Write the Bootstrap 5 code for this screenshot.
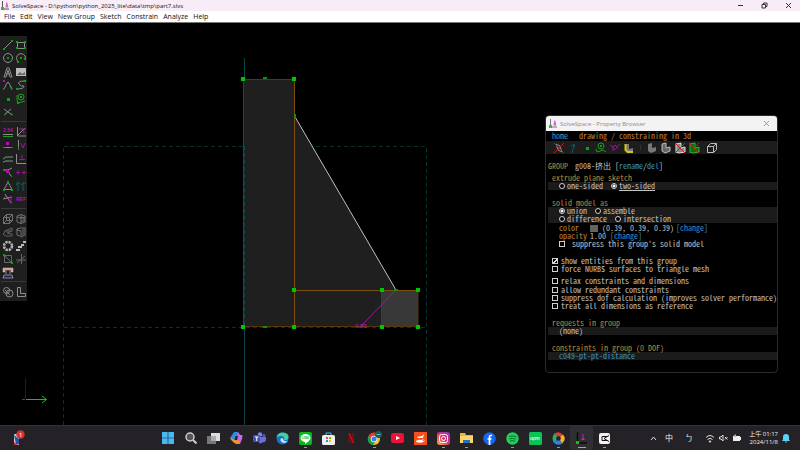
<!DOCTYPE html>
<html lang="en">
<head>
<meta charset="utf-8">
<meta name="viewport" content="width=device-width, initial-scale=1">
<title>SolveSpace</title>
<link rel="stylesheet" href="https://cdn.jsdelivr.net/npm/bootstrap@5.3.0/dist/css/bootstrap.min.css">
<style>
body{font-family:"Open Sans","Noto Sans CJK TC",sans-serif;font-size:6px;line-height:8px;color:#111}
svg{display:block}
.btn{font-size:inherit;line-height:inherit;border:0;border-radius:0;color:inherit;padding:0}
.titlebar{height:11px;background:#f8ecf6;padding-left:1px}
.app-mark{margin-right:2px}
.win-ctl .btn{width:24px;height:11px;display:flex;align-items:center;justify-content:center}
.menubar{height:12px;background:#fff;padding-left:4px;gap:5px;font-size:7px;border-bottom:1px solid #777}
.workspace{background:#000;min-height:0}
.tools{width:27px;top:13px;background:#1f1f1f;padding:2px 1px 3px}
.tool-grid{display:grid;grid-template-columns:repeat(2,13px)}
.tool-grid .btn{height:13px;display:flex;align-items:center;justify-content:center}
.g6{height:81px;align-content:space-between}
.g5{height:67px;align-content:space-between}
.sep{height:1px;background:#3a3a3a;margin:2px 0 3px}
.ic{fill:none;stroke:#8e8e8e;stroke-width:1}
.ic .g{stroke:#1f9a1f}.ic .m{stroke:#a010a0}.ic .t{stroke:#0d6060}
.ic .gf{fill:#0a0;stroke:none}.ic .mf{fill:#b010b0;stroke:none}.ic .wf{fill:#bbb;stroke:none}
.ic text{stroke:none;fill:#b010b0;font:bold 5px "Liberation Sans",sans-serif}
.props{width:233px;top:92px;right:22px;background:#000;border:1px solid #2b2b2b;border-radius:4px;overflow:hidden;
 font-family:"Noto Sans Mono CJK TC","Liberation Mono","Noto Sans CJK TC",monospace;font-size:8px;line-height:8px;color:#c4c4c4}
.props-title{height:15px;background:#f3f3f3;color:#8c8c8c;font-family:"Open Sans",sans-serif;font-size:6px;padding:0 7px 0 3px}
.props a{color:#3a94c4;text-decoration:none}
.props a.opt{color:#c4c4c4;text-decoration:underline}
.hd{color:#bd8a3c}
.ln{display:flex;align-items:center;height:8px;white-space:pre}
.in0{padding-left:2px}.in1{padding-left:6px}.in2{padding-left:13px}
.band{background:#1b1b1b;margin-left:2px}
.band .in2{padding-left:11px}
.pbar{height:13px;background:#1d1d1d;padding-left:6px}
.pbar .btn{width:14px;height:13px;display:flex;align-items:center;justify-content:center}
.w-home{width:27px}.w-color{width:31px}.w-swatch{width:12px}.w-rgb{width:74px}
.swatch{width:8px;height:7px;background:#646464}
.props input{appearance:none;margin:0;width:6px;height:6px;border:1px solid #d0d0d0;background:#000;flex:none}
.props input[type=radio]{border-radius:50%}
.props input[type=radio]:checked{background:radial-gradient(#fff 0 1px,#000 2px)}
.props input[type=checkbox]:checked{background:linear-gradient(135deg,#000 40%,#ddd 45% 65%,#000 70%)}
.props label{display:flex;align-items:center}
.lr{gap:2px}.lc{gap:3px}.ls{gap:7px}
.sp4{margin-top:4px}.sp1{margin-top:1px}.sp9{margin-top:9px}
.props-end{height:12px}
.taskbar{height:25px;background:#242226;border-top:1px solid #343236;color:#eee}
.weather{width:156px;padding-left:12px}
.apps .btn{width:23px;height:24px;display:flex;align-items:center;justify-content:center;position:relative}
.apps .run::after{content:"";position:absolute;bottom:2px;width:3px;height:1px;background:#999}
.apps .cur{background:#302e32;border-radius:2px}
.apps .cur::after{content:"";position:absolute;bottom:2px;width:8px;height:1px;background:#5cc0f0}
.tray{padding-right:10px}
.tray .btn{font-size:8px}
.clock{width:36px;text-align:right}
</style>
<script src="https://cdn.jsdelivr.net/npm/bootstrap@5.3.0/dist/js/bootstrap.bundle.min.js"></script>
</head>
<body class="vh-100 d-flex flex-column overflow-hidden">
<header>
 <div class="titlebar d-flex align-items-center">
  <svg class="app-mark" width="9" height="9" viewBox="0 0 9 9"><path d="M1.500 0v8H8" fill="none" stroke="#555"/><path d="M4.500 6.500l.8-5h1l1 5z" fill="#d060d0"/><path d="M0 6h3v3H0z" fill="#3b3"/></svg>
  <span>SolveSpace - D:\python\python_2025_lite\data\tmp\part7.slvs</span>
  <div class="win-ctl d-flex ms-auto">
   <button class="btn" aria-label="Minimize"><svg width="7" height="7" viewBox="0 0 7 7"><path d="M1 3.500h5" stroke="#333"/></svg></button>
   <button class="btn" aria-label="Restore"><svg width="7" height="7" viewBox="0 0 7 7" fill="none" stroke="#333"><path d="M1 2.500h3.500V6H1zM2.500 2V1H6v3.500H5"/></svg></button>
   <button class="btn" aria-label="Close"><svg width="7" height="7" viewBox="0 0 7 7"><path d="M1 1l5 5M6 1L1 6" stroke="#333"/></svg></button>
  </div>
 </div>
 <nav class="menubar d-flex align-items-center" aria-label="Main menu">
  <button class="btn">File</button><button class="btn">Edit</button><button class="btn">View</button><button class="btn">New Group</button><button class="btn">Sketch</button><button class="btn">Constrain</button><button class="btn">Analyze</button><button class="btn">Help</button>
 </nav>
</header>

<main class="workspace flex-fill position-relative overflow-hidden">
 <svg class="w-100 h-100" viewBox="0 23 800 402" preserveAspectRatio="xMidYMid meet" role="img" aria-label="Sketch of an extruded part">
  <g fill="none" stroke="#06302b" stroke-dasharray="4 3">
   <path d="M64 146.500H426.500V425M63.500 425V146M64 327.500H426"/>
  </g>
  <path d="M244.500 58v21M244.500 327v98" stroke="#0a4246"/>
  <path d="M243 79h51.500v37L396 290h22v37H243z" fill="#1f1f1f"/>
  <path d="M381.500 290H418v36.500h-36.500z" fill="#383838"/>
  <path d="M244.500 146v180" stroke="#0a4b4b" stroke-dasharray="4 3"/>
  <path d="M243.500 326.500V79.500H294M243 326.500H418V290M381.500 290v36" fill="none" stroke="#5a3610"/>
  <path d="M294.500 79v247M294 290.500H418" fill="none" stroke="#7c4c10"/>
  <path d="M294.500 116L396 290" stroke="#c0c0c0"/>
  <path d="M396 290l-35 36" stroke="#9a1a9a"/>
  <text x="355" y="328" font-family="Liberation Sans" font-size="6" fill="#c020c0">0.80</text>
  <path fill="#00c800" d="M241 77h4v4h-4zM292 77h4v4h-4zM241 325h4v4h-4zM292 325h4v4h-4zM292 288h4v4h-4zM380 288h4v4h-4zM416 288h4v4h-4zM380 325h4v4h-4zM416 325h4v4h-4z"/>
  <path fill="#109010" d="M263 77h4v2h-4zM263 326h4v2h-4zM294 114h2v4h-2zM394 289h4v2h-4z"/>
  <path d="M25.500 378v21" stroke="#0000ff"/><path d="M22 399.500h3" stroke="#e00"/>
  <path d="M26 399.500h20M42 396l4.500 3.500L42 403" fill="none" stroke="#00d000"/>
 </svg>

 <div class="tools position-absolute start-0">
  <div class="tool-grid g6">
   <button class="btn" aria-label="Line"><svg class="ic" width="12" height="12"><path d="M2 10l8-8"/><path class="gf" d="M1 9h2v2H1zM9 1h2v2H9z"/></svg></button>
   <button class="btn" aria-label="Rectangle"><svg class="ic" width="12" height="12"><path d="M2.500 3.500h7v6h-7z"/><path class="gf" d="M1 2h2v2H1zM9 2h2v2H9zM1 8h2v2H1zM9 8h2v2H9z"/></svg></button>
   <button class="btn" aria-label="Circle"><svg class="ic" width="12" height="12"><circle cx="6" cy="6" r="4.500"/><path class="gf" d="M5 5h2v2H5z"/></svg></button>
   <button class="btn" aria-label="Arc"><svg class="ic" width="12" height="12"><path d="M3 9.500A4.500 4.500 0 1 1 10.500 6"/><path class="gf" d="M5 5h2v2H5zM9 6h2v2H9zM2 9h2v2H2z"/></svg></button>
   <button class="btn" aria-label="Text"><svg class="ic" width="12" height="12"><path d="M2 11l3-9h2l3 9H8L6 4 4 11zM4 8h4"/></svg></button>
   <button class="btn" aria-label="Image"><svg class="ic" width="12" height="12"><path class="wf" d="M1 2h10v8H1z"/><path d="M2 9l3-3 2 2 3-2v3z" fill="#666" stroke="none"/></svg></button>
   <button class="btn" aria-label="Tangent arc"><svg class="ic" width="12" height="12"><path d="M2 10l3-6q1-2 2 0l3 6"/><path class="g" d="M1 11l2-3M8 7l2 4"/><path class="mf" d="M1 1h2v2H1z"/></svg></button>
   <button class="btn" aria-label="Bezier"><svg class="ic" width="12" height="12"><path d="M10 2Q2 2 4 5t5 2q0 3-7 3"/><path class="gf" d="M9 1h2v2H9zM1 9h2v2H1z"/></svg></button>
   <button class="btn" aria-label="Point"><svg class="ic" width="12" height="12"><path class="gf" d="M5 5h3v3H5z"/></svg></button>
   <button class="btn" aria-label="Construction"><svg class="ic" width="12" height="12"><circle class="g" cx="6" cy="4" r="3"/><path class="g" d="M2 2v5l1 3 7-2"/><path class="gf" d="M5 3h2v2H5zM2 9h2v2H2z"/></svg></button>
   <button class="btn" aria-label="Split"><svg class="ic" width="12" height="12"><path d="M2 3l8 6M2 9l7-6"/><path class="g" d="M2 9l3-2M8 7l3 2"/></svg></button>
  </div>
  <div class="sep"></div>
  <div class="tool-grid g6">
   <button class="btn" aria-label="Distance"><svg class="ic" width="12" height="12"><text x="1" y="6">2.54</text><path d="M1 8.500h10"/><path class="g" d="M1 10.500h10"/></svg></button>
   <button class="btn" aria-label="Angle"><svg class="ic" width="12" height="12"><path d="M2.500 1v9H11M3 9l7-7"/><path class="m" d="M4 3h7M6 2q4 2 3 6"/></svg></button>
   <button class="btn" aria-label="Horizontal"><svg class="ic" width="12" height="12"><path d="M1 8.500h10"/><path class="g" d="M1 8.500h3M8 8.500h3"/><path class="mf" d="M4 3h3v3H4z"/></svg></button>
   <button class="btn" aria-label="Vertical"><svg class="ic" width="12" height="12"><path d="M3.500 1v10"/><path class="g" d="M3.500 8v3"/><path class="m" d="M6 4l2 5 2-5"/></svg></button>
   <button class="btn" aria-label="Parallel"><svg class="ic" width="12" height="12"><path d="M1 6l3-2 7 0M1 9l3-1h7"/><path class="g" d="M1 6l3-2M1 9l4-1"/></svg></button>
   <button class="btn" aria-label="Perpendicular"><svg class="ic" width="12" height="12"><path d="M1.500 1v9.500H11"/><path class="m" d="M4 6.500h6M7 2v5"/></svg></button>
   <button class="btn" aria-label="Point on line"><svg class="ic" width="12" height="12"><path d="M1 4h5l4-2M6 5l3 5"/><path class="g" d="M1 4h3M7 7l3 4"/><path class="mf" d="M4 4h3v3H4z"/></svg></button>
   <button class="btn" aria-label="Symmetric"><svg class="ic" width="12" height="12"><path class="m" d="M1 6.500h4M3 4.500v4M7 6.500h4M9 4.500v4"/></svg></button>
   <button class="btn" aria-label="Equal"><svg class="ic" width="12" height="12"><path d="M2 9.500L6 2l4 7.500z"/><path class="m" d="M3 6l2 1M7 6l2-1"/><path class="gf" d="M1 9h2v2H1zM9 9h2v2H9zM5 1h2v2H5z"/></svg></button>
   <button class="btn" aria-label="Same orientation"><svg class="ic" width="12" height="12"><path class="t" d="M3 11V3M1 5l2-3 2 2M8 11V3M6 5l3-3 2 2"/></svg></button>
   <button class="btn" aria-label="Other angle"><svg class="ic" width="12" height="12"><path d="M3 1l6 9M1 6l9-2"/><path class="m" d="M2 5l3-3M6 7l4 2M9 3v8"/></svg></button>
   <button class="btn" aria-label="Reference"><svg class="ic" width="12" height="12"><text x="1" y="8">REF</text></svg></button>
  </div>
  <div class="sep"></div>
  <div class="tool-grid g5">
   <button class="btn" aria-label="Extrude"><svg class="ic" width="12" height="12" opacity=".75"><path d="M1.500 4.500h6v6h-6zM4.500 1.500h6v6h-6zM1.500 4.500l3-3M7.500 4.500l3-3M7.500 10.500l3-3M1.500 10.500l3-3"/></svg></button>
   <button class="btn" aria-label="Lathe"><svg class="ic" width="12" height="12" opacity=".75"><path d="M2 3q4-3 8 0v6q-4 3-8 0zM6 2v9M2 4q4 2 8 0M6 5h3v3H6"/></svg></button>
   <button class="btn" aria-label="Helix"><svg class="ic" width="12" height="12" opacity=".6"><path d="M1 8l4-4 5-2v3L5 7l5 1v2l-6 0zM2 5h7"/></svg></button>
   <button class="btn" aria-label="Revolve"><svg class="ic" width="12" height="12" opacity=".75"><path d="M2 3l3-1h5v7l-4 2V5L2 4zM2 3v6l3 1M8 3v6"/></svg></button>
   <button class="btn" aria-label="Step rotate"><svg class="ic" width="12" height="12"><circle cx="6" cy="6" r="4" stroke="#b5b5b5" stroke-width="2.500" stroke-dasharray="2.300 .840"/></svg></button>
   <button class="btn" aria-label="Step translate"><svg class="ic" width="12" height="12"><path class="wf" d="M1 9h4v2H1zM3 6h4v2H3zM6 4h3v2H6zM8 1h3v2H8z"/></svg></button>
   <button class="btn" aria-label="Sketch in plane"><svg class="ic" width="12" height="12"><path d="M2.500 2.500h7v7h-7z" stroke="#666"/><path class="g" d="M2 2l8 8"/><path class="gf" d="M1 1h2v2H1zM9 9h2v2H9z"/></svg></button>
   <button class="btn" aria-label="Sketch in 3D"><svg class="ic" width="12" height="12"><path d="M1 7h10M2 10l8-7" stroke="#666"/><path class="g" d="M6.500 1v10"/></svg></button>
   <button class="btn" aria-label="Link"><svg class="ic" width="12" height="12"><path d="M1 1h10v4H9V3H3v2H1z" fill="#d98" stroke="#ccc" stroke-width=".5"/><path d="M4 4v3M8 4v3"/><path d="M1 11l1-3h8l1 3z" fill="#226" stroke="#ccc" stroke-width=".6"/></svg></button>
  </div>
  <div class="sep"></div>
  <div class="tool-grid">
   <button class="btn" aria-label="Nearest isometric"><svg class="ic" width="12" height="12"><circle cx="4.500" cy="4.500" r="3"/><circle cx="7.500" cy="7.500" r="3.500"/><path d="M3 4l5 5"/></svg></button>
   <button class="btn" aria-label="Align view"><svg class="ic" width="12" height="12"><path d="M2.500 1.500h3v6h5v3h-8z"/></svg></button>
  </div>
 </div>

 <section class="props position-absolute" aria-label="Property Browser">
  <div class="props-title d-flex align-items-center">
   <svg class="app-mark" width="9" height="9" viewBox="0 0 9 9"><path d="M1.500 0v8H8" fill="none" stroke="#777"/><path d="M4.500 6.500l.8-5h1l1 5z" fill="#d060d0"/><path d="M0 6h3v3H0z" fill="#3b3"/></svg>
   <span>SolveSpace - Property Browser</span>
   <button class="btn ms-auto" aria-label="Close"><svg width="7" height="7"><path d="M1 1l5 5M6 1L1 6" stroke="#999"/></svg></button>
  </div>
  <div class="ln in1 sp1"><a class="w-home" href="#">home</a><span class="hd">drawing / constraining in 3d</span></div>
  <div class="pbar d-flex sp1">
   <button class="btn" aria-label="Workplanes"><svg class="ic" width="12" height="12"><path d="M3 2l4 2 2 6-4-2z"/><path d="M1 1l10 10M11 1L1 11" stroke="#b22"/></svg></button>
   <button class="btn" aria-label="Normals"><svg class="ic" width="12" height="12"><path class="t" d="M5 11L7 3M4 4l3-2 1 3"/></svg></button>
   <button class="btn" aria-label="Points"><svg class="ic" width="12" height="12"><path class="gf" d="M5 5h3v3H5z"/></svg></button>
   <button class="btn" aria-label="Construction"><svg class="ic" width="12" height="12"><circle class="g" cx="6" cy="4" r="3"/><path class="g" d="M1 7l1 3 6-2 3 2"/><path class="gf" d="M5 3h2v2H5z"/></svg></button>
   <button class="btn" aria-label="Constraints"><svg class="ic" width="12" height="12"><path class="m" d="M1 3l3 2 2-2 2 2 3-3M4 5v4M4 6l3 2M8 5v2"/></svg></button>
   <button class="btn" aria-label="Faces"><svg class="ic" width="12" height="12"><path d="M2 2h4v5l4-1v4H4L2 8z" fill="#777" stroke="none"/><path d="M2.500 2v6l2 2H10" stroke="#d4c41a" stroke-width="2"/></svg></button>
   <span class="border-start border-secondary mx-1 my-1 opacity-25"></span>
   <button class="btn" aria-label="Shaded"><svg class="ic" width="12" height="12"><path d="M2 2l4-1v5l4-1v4l-5 2-3-2z" fill="#777" stroke="none"/></svg></button>
   <button class="btn" aria-label="Edges"><svg class="ic" width="12" height="12"><path d="M2 2l4-1v5l4-1v4l-5 2-3-2z" fill="#666" stroke="#bbb"/></svg></button>
   <button class="btn" aria-label="Outlines"><svg class="ic" width="12" height="12"><path d="M2 2l5-1v5l4-1v5l-6 1-3-1z" fill="#888" stroke="#ddd"/><path d="M1 1l10 10M11 1L1 11" stroke="#c22"/></svg></button>
   <button class="btn" aria-label="Mesh"><svg class="ic" width="12" height="12"><path d="M2 2l5-1v5l4-1v5l-6 1-3-1z" fill="#161" stroke="#2b2"/><path d="M1 1l10 10M11 1L1 11" stroke="#a32"/></svg></button>
   <button class="btn ms-1" aria-label="Hidden lines"><svg class="ic" width="12" height="12"><path d="M1.500 4.500h6v6h-6zM1.500 4.500l3-3h6v6l-3 3M7.500 4.500l3-3" stroke="#bbb"/></svg></button>
  </div>
  <div class="ln in0 mt-2"><span class="hd w-home">GROUP</span><span>g008-挤出 [<a href="#">rename</a>/<a href="#">del</a>]</span></div>
  <div class="ln in1 hd sp4">extrude plane sketch</div>
  <div class="band"><div class="ln in2"><label class="lr"><input type="radio" name="side">one-sided</label><label class="lr ms-2"><input type="radio" name="side" checked><a class="opt" href="#">two-sided</a></label></div></div>
  <div class="ln in1 hd sp9">solid model as</div>
  <div class="band" role="radiogroup">
   <div class="ln in2"><label class="lr"><input type="radio" name="op" checked>union</label><label class="lr ms-2"><input type="radio" name="op">assemble</label></div>
   <div class="ln in2"><label class="lr"><input type="radio" name="op">difference</label><label class="lr ms-2"><input type="radio" name="op">intersection</label></div>
  </div>
  <div class="ln in2 sp1"><span class="hd w-color">color</span><span class="w-swatch"><span class="swatch d-block"></span></span><span class="w-rgb">(0.39, 0.39, 0.39)</span><a href="#">[change]</a></div>
  <div class="ln in2"><span class="hd w-color">opacity</span><span>1.00 <a href="#">[change]</a></span></div>
  <div class="ln in2"><label class="ls"><input type="checkbox">suppress this group's solid model</label></div>
  <div class="ln in1 sp9"><label class="lc"><input type="checkbox" checked>show entities from this group</label></div>
  <div class="ln in1"><label class="lc"><input type="checkbox">force NURBS surfaces to triangle mesh</label></div>
  <div class="ln in1 sp4"><label class="lc"><input type="checkbox">relax constraints and dimensions</label></div>
  <div class="ln in1 sp1"><label class="lc"><input type="checkbox">allow redundant constraints</label></div>
  <div class="ln in1"><label class="lc"><input type="checkbox">suppress dof calculation (improves solver performance)</label></div>
  <div class="ln in1"><label class="lc"><input type="checkbox">treat all dimensions as reference</label></div>
  <div class="ln in1 hd sp9">requests in group</div>
  <div class="band"><div class="ln in2">(none)</div></div>
  <div class="ln in1 hd sp9">constraints in group (0 DOF)</div>
  <div class="band"><div class="ln in2"><a href="#">c049-pt-pt-distance</a></div></div>
  <div class="props-end"></div>
 </section>
</main>

<footer class="taskbar d-flex align-items-center">
 <div class="weather">
  <button class="btn" aria-label="News, 1 new"><svg width="14" height="16" viewBox="0 0 14 16"><rect x="2" y="4" width="5" height="11" rx="1" fill="#ccd"/><path d="M2 5l5 4v5H4z" fill="#2456a8"/><path d="M2 12l4 3H2z" fill="#c33"/><circle cx="8.500" cy="4.500" r="4.200" fill="#d33426"/><text x="7" y="7" font-size="6" fill="#fff" font-family="Roboto">1</text></svg></button>
 </div>
 <nav class="apps d-flex" aria-label="Apps">
  <button class="btn" aria-label="Start"><svg width="12" height="12"><path d="M0 0h5.700v5.700H0zM6.300 0H12v5.700H6.300zM0 6.300h5.700V12H0zM6.300 6.300H12V12H6.300z" fill="#45b9f2"/></svg></button>
  <button class="btn" aria-label="Search"><svg width="12" height="12" fill="none" stroke="#ccc"><circle cx="5" cy="5" r="4" fill="#555" stroke-width="1.500"/><path d="M8 8l3.500 3.500" stroke-width="2"/></svg></button>
  <button class="btn" aria-label="Task view"><svg width="13" height="12"><path d="M0 4h9v8H0z" fill="#777"/><path d="M4 1h9v8H4z" fill="#ddd"/><path d="M4 4h5v5H4z" fill="#aaa"/></svg></button>
  <button class="btn" aria-label="Copilot"><svg width="13" height="12"><path d="M4 0h4l2 4-3 6-5-1-2-3z" fill="#2b8fe0"/><path d="M8 0l2 3h2q1 1 0 4l-2 5H6z" fill="#c46be0"/><path d="M0 6l3 4 3 2h3l1-3z" fill="#f09030"/><path d="M5.500 4h2.500L7 8H4.500z" fill="#242226"/></svg></button>
  <button class="btn" aria-label="Teams"><svg width="13" height="12"><circle cx="7" cy="2.500" r="2.200" fill="#7b83eb"/><circle cx="11" cy="3.500" r="1.500" fill="#5059c9"/><path d="M5 5h8v3q-1 3-3 2-1 2-4 1z" fill="#6a70d8"/><rect y="3" width="7" height="7" rx="1" fill="#464eb8"/><path d="M2 5h3.500M3.700 5v4" stroke="#fff"/></svg></button>
  <button class="btn" aria-label="Edge"><svg width="13" height="13"><circle cx="6.500" cy="6.500" r="6" fill="#1473c8"/><path d="M.5 6Q1 .5 7 .5q6 .5 5.500 5-.5 3-4.500 2.500 1-4-3-4Q1 4 .5 6z" fill="#43cfa0"/><path d="M5 6q-2 4 3 5 2 0 4-2-3 1-4.500-1 0-2-2.500-2z" fill="#bfe4f6"/></svg></button>
  <button class="btn run" aria-label="LINE"><svg width="13" height="13"><rect width="13" height="13" rx="2" fill="#06b918"/><ellipse cx="6.500" cy="6" rx="5" ry="4" fill="#fff"/><path d="M6 9h4l-4 3z" fill="#fff"/><text x="3" y="7" font-size="3" font-weight="700" fill="#06b918">LINE</text></svg></button>
  <button class="btn" aria-label="Store"><svg width="13" height="13"><path d="M4 3V1h5v2" fill="none" stroke="#4ab5ea"/><rect y="3" width="13" height="10" rx="1.500" fill="#eee"/><path d="M4 5h2v2H4z" fill="#f25022"/><path d="M7 5h2v2H7z" fill="#7fba00"/><path d="M4 8h2v2H4z" fill="#00a4ef"/><path d="M7 8h2v2H7z" fill="#ffb900"/></svg></button>
  <button class="btn" aria-label="Netflix"><svg width="7" height="10"><path d="M1.500 0v10M5 0v10" stroke="#900810" stroke-width="1.600"/><path d="M1.200 0l4 10" stroke="#d00914" stroke-width="1.600"/></svg></button>
  <button class="btn run" aria-label="Chrome"><svg width="15" height="15"><circle cx="7" cy="8" r="6" fill="#fbc116"/><path d="M1.500 5A6 6 0 0 1 12.500 5H7L4.500 9z" fill="#e33b2e"/><path d="M1.500 5A6 6 0 0 0 6 14l3-4.500H5z" fill="#229b4a"/><circle cx="7" cy="8" r="3.200" fill="#fff"/><circle cx="7" cy="8" r="2.500" fill="#3b7ded"/><circle cx="11.500" cy="3.500" r="3.500" fill="#1b5b5b"/><path d="M9.500 3.500h4" stroke="#6ba" /></svg></button>
  <button class="btn" aria-label="YouTube"><svg width="13" height="10"><rect width="13" height="10" rx="2.500" fill="#f0103a"/><path d="M5 3l4 2-4 2z" fill="#fff"/></svg></button>
  <button class="btn" aria-label="Shop"><svg width="13" height="13"><path d="M0 0h13v13H0z" fill="#f4501c"/><path d="M2 9q3-2 5-1l3-1-2 2q2 0 3-1-2 4-9 2zM3 5l5-1 2-2-1 4H4z" fill="#fff"/></svg></button>
  <button class="btn run" aria-label="Instagram"><svg width="13" height="13"><defs><linearGradient id="ig" x1="0" y1="1" x2="1" y2="0"><stop stop-color="#fdb23c"/><stop offset=".5" stop-color="#e1306c"/><stop offset="1" stop-color="#8a3ac8"/></linearGradient></defs><rect width="13" height="13" rx="3" fill="url(#ig)"/><g fill="none" stroke="#fff"><rect x="2.500" y="2.500" width="8" height="8" rx="2"/><circle cx="6.500" cy="6.500" r="2"/></g></svg></button>
  <button class="btn run" aria-label="Files"><svg width="13" height="12"><path d="M0 1h5l1 2h7v8H0z" fill="#f2b632"/><path d="M0 4h13v7H0z" fill="#fad567"/><path d="M3 8h7v3H3z" fill="#1b74c5"/></svg></button>
  <button class="btn" aria-label="Facebook"><svg width="13" height="13"><circle cx="6.500" cy="6.500" r="6.300" fill="#1566f0"/><path d="M9 3.500H7.500q-1 0-1 1.500v8M4.500 7h4" fill="none" stroke="#fff" stroke-width="1.700"/></svg></button>
  <button class="btn run" aria-label="Spotify"><svg width="13" height="13"><circle cx="6.500" cy="6.500" r="6.200" fill="#20cf5c"/><path d="M3 4.500q4-1.500 7.500.5M3.500 6.800q3-1 6 .3M4 9q2.500-.8 5 .3" fill="none" stroke="#163" /></svg></button>
  <button class="btn" aria-label="iQIYI"><svg width="13" height="13"><rect width="13" height="13" rx="1.500" fill="#08c455"/><text x="1" y="8" font-size="4" font-weight="700" fill="#fff">iQIYI</text></svg></button>
  <button class="btn run" aria-label="Photos"><svg width="13" height="13"><path d="M6.500 6.500L3 1q5-2 8 2z" fill="#e83a3a"/><path d="M6.500 6.500l4.500-4q4 5-1 9z" fill="#f4b428"/><path d="M6.500 6.500l4 5q-5 3-9-1z" fill="#2a84e8"/><path d="M6.500 6.500l-5 4Q-1 4 3 1z" fill="#28b060"/><circle cx="6.500" cy="6.500" r="2.300" fill="#242226"/></svg></button>
  <button class="btn cur" aria-label="SolveSpace"><svg width="13" height="13"><path d="M2.500 0v11H12" fill="none" stroke="#0a0a0a" stroke-width="1.500"/><path d="M6 8l1.500-2V2h1v4L10 8z" fill="#b030b0"/><path d="M1 9h3v3H1z" fill="#0c0"/></svg></button>
  <button class="btn run" aria-label="CapCut"><svg width="13" height="13"><rect x="1" y="1" width="11" height="11" rx="2" fill="#f2f2f2"/><path d="M9 4.500H4v4h5M6 6.500l5-3M6 6.500l5 3" fill="none" stroke="#111"/></svg></button>
 </nav>
 <div class="tray d-flex align-items-center ms-auto">
  <button class="btn me-1" aria-label="Hidden icons"><svg width="7" height="5"><path d="M1 4l2.500-3L6 4" fill="none" stroke="#ddd"/></svg></button>
  <button class="btn mx-1">中</button>
  <button class="btn mx-2">ㄅ</button>
  <svg class="ms-1" width="10" height="9" fill="none" stroke="#ddd"><path d="M1 3.500q4-4 8 0M2.500 5.500q2.500-2.500 5 0"/><circle cx="5" cy="7.500" r=".7" fill="#ddd"/></svg>
  <svg class="ms-1" width="9" height="8" fill="none" stroke="#ddd"><path d="M.5 3h1.500l2-2v6L2 5H.5zM6 3l2.500 2.500M8.500 3L6 5.500"/></svg>
  <svg class="ms-1" width="10" height="8"><path d="M1 2h7v1h1v3H8v1H1z" fill="#eee"/><path d="M1 2l3-2v3" fill="#aaa"/></svg>
  <div class="clock">上午 01:17<br>2024/11/8</div>
  <svg class="ms-1" width="8" height="9"><path d="M0 7l1-1.500V3q0-3 3-3t3 3v2.500L8 7zM2.800 7.500h2.400L4 9z" fill="#5fd0f2"/></svg>
 </div>
</footer>
</body>
</html>
